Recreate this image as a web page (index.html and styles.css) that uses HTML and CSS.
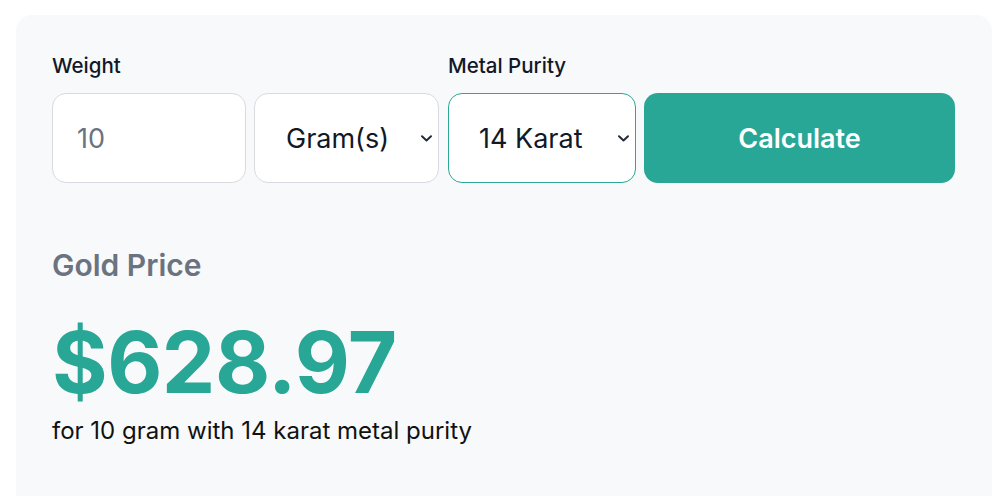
FILE: index.html
```html
<!DOCTYPE html>
<html lang="en">
<head>
<meta charset="utf-8">
<title>Gold Price Calculator</title>
<link rel="stylesheet" href="styles.css">
</head>
<body>
<div class="card">
  <div class="form">
    <div class="field field-weight">
      <label class="label" for="weight">Weight</label>
      <div class="row">
        <input id="weight" class="control input" type="text" placeholder="10">
        <div class="select-wrap select-unit">
          <select class="control select">
            <option>Gram(s)</option>
          </select>
          <svg class="chevron" width="11" height="7" viewBox="0 0 11 7" aria-hidden="true"><path d="M1 1.2 L5.5 5.5 L10 1.2" fill="none" stroke="#1f2937" stroke-width="1.9" stroke-linecap="round" stroke-linejoin="round"/></svg>
        </div>
      </div>
    </div>
    <div class="field field-purity">
      <label class="label" for="purity">Metal Purity</label>
      <div class="row">
        <div class="select-wrap select-purity">
          <select id="purity" class="control select">
            <option>14 Karat</option>
          </select>
          <svg class="chevron" width="11" height="7" viewBox="0 0 11 7" aria-hidden="true"><path d="M1 1.2 L5.5 5.5 L10 1.2" fill="none" stroke="#1f2937" stroke-width="1.9" stroke-linecap="round" stroke-linejoin="round"/></svg>
        </div>
        <button class="btn" type="button">Calculate</button>
      </div>
    </div>
  </div>
  <div class="result">
    <h2 class="result-title">Gold Price</h2>
    <div class="price">$628.97</div>
    <p class="note">for 10 gram with 14 karat metal purity</p>
  </div>
</div>
</body>
</html>
```

FILE: styles.css
```css
* { box-sizing: border-box; }
html, body { margin: 0; padding: 0; background: #ffffff; }
body {
  font-family: Inter, "Noto Sans", sans-serif;
  color: #111827;
  padding: 15px 15px 0 16px;
}
.card {
  background: #f7f9fa;
  border-radius: 16px;
  padding: 36px 37px 60px 36px;
  min-height: 520px;
}
.form {
  display: flex;
  gap: 9px;
}
.field {
  display: flex;
  flex-direction: column;
}
.field-weight { width: 387px; }
.field-purity { flex: 1; }
.label {
  font-size: 20.5px;
  font-weight: 500;
  line-height: 30px;
  margin-bottom: 12px;
  color: #111827;
}
.row {
  display: flex;
  gap: 8px;
}
.control {
  height: 90px;
  border: 1px solid #d7dbe0;
  border-radius: 14px;
  background: #ffffff;
  font-family: Inter, "Noto Sans", sans-serif;
  font-size: 27px;
  color: #111827;
  outline: none;
}
.input {
  width: 194px;
  padding: 0 24px;
}
.input::placeholder { color: #6b7280; }
.select-wrap {
  position: relative;
}
.select {
  width: 100%;
  -webkit-appearance: none;
  appearance: none;
  padding: 0 24px 0 31px;
}
.select-unit { width: 185px; }
.select-purity { width: 188px; }
.select-purity .select {
  border-color: #2aa796;
  padding-left: 30px;
}
.chevron {
  position: absolute;
  right: 7px;
  top: 42px;
  pointer-events: none;
}
.btn {
  flex: 1;
  height: 90px;
  border: none;
  border-radius: 14px;
  background: #28a796;
  color: #ffffff;
  font-family: Inter, "Noto Sans", sans-serif;
  font-size: 27px;
  font-weight: 600;
}
.result {
  margin-top: 62px;
}
.result-title {
  margin: 0;
  font-size: 30px;
  font-weight: 600;
  line-height: 40px;
  color: #6b7280;
}
.price {
  margin-top: 29px;
  font-size: 85px;
  font-weight: 700;
  line-height: 98px;
  color: #28a796;
  letter-spacing: -0.5px;
}
.note {
  margin: 4px 0 0;
  font-size: 24px;
  line-height: 30px;
  color: #111111;
}
```
